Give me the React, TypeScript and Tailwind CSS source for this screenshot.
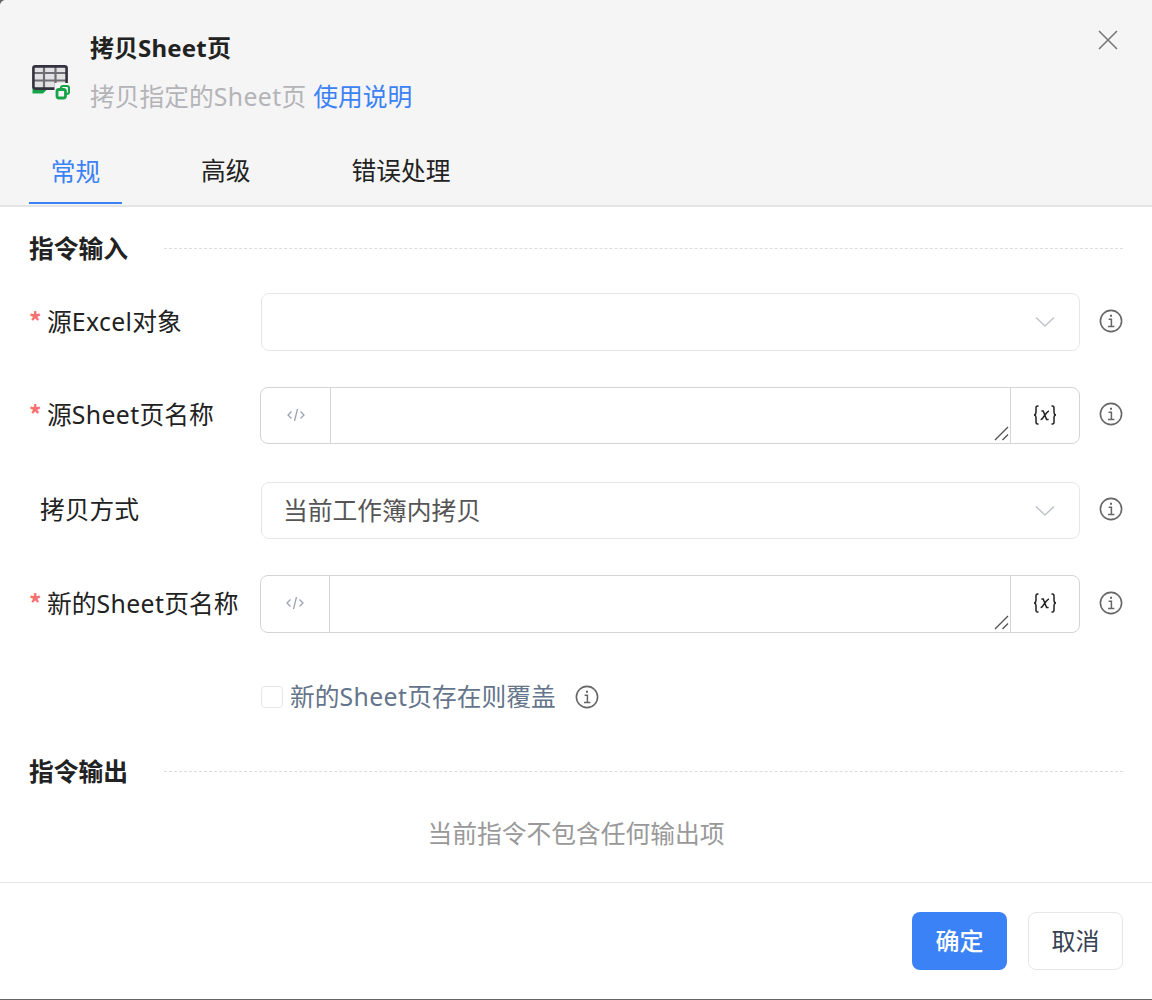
import React from "react";

const Lat = ({ children }: { children: React.ReactNode }) => <span className="tracking-[0.4px]">{children}</span>;

const Info = () => (
  <svg width="24" height="24" viewBox="0 0 24 24" fill="none" stroke="#666" className="shrink-0">
    <circle cx="12" cy="12" r="10.6" strokeWidth="1.6" />
    <path d="M12 5.8v1.9" strokeWidth="2" />
    <path d="M9.6 10.2H12.4V17M9 17.6H15.4" strokeWidth="1.5" />
  </svg>
);

const Chevron = () => (
  <svg width="20" height="12" viewBox="0 0 20 12" fill="none" stroke="#c0c4cc" strokeWidth="1.5" className="shrink-0">
    <path d="M1 1.5L10 10L19 1.5" />
  </svg>
);

const Star = () => (
  <span className="w-[18px] shrink-0 -translate-y-[2px] font-['Noto_Sans_CJK_SC',sans-serif] font-bold text-[#f87171]">*</span>
);

const Label = ({ children, required, indent }: { children: React.ReactNode; required?: boolean; indent?: boolean }) => (
  <div className={`flex w-[231px] shrink-0 items-center pb-[1px] text-[24.75px] leading-[36px] text-[#222222] ${indent ? "pl-[11px]" : ""}`}>
    {required && <Star />}
    <span className="whitespace-nowrap">{children}</span>
  </div>
);

const Select = ({ value, height }: { value?: string; height: string }) => (
  <div className={`flex ${height} ml-px flex-1 items-center justify-between rounded-[8px] border border-[#e4e7ed] bg-white pl-[21px] pr-[24px]`}>
    <span className="text-[24.75px] leading-[36px] text-[#555555]">{value}</span>
    <Chevron />
  </div>
);

const CodeInput = ({ left, height }: { left: string; height: string }) => (
  <div className={`flex ${height} flex-1 rounded-[8px] border border-[#d4d4d8] bg-white`}>
    <div className={`flex ${left} shrink-0 items-center justify-center border-r border-[#d4d4d8] pb-[2px]`}>
      <svg width="18" height="14" viewBox="0 0 18 14" fill="none" stroke="#9aa3b5" strokeWidth="1.3">
        <path d="M4.5 3.5L1 7L4.5 10.5M13.5 3.5L17 7L13.5 10.5M10.5 1L7.5 13" />
      </svg>
    </div>
    <div className="flex flex-1 items-end justify-end pb-[2px] pr-px">
      <svg width="15" height="15" viewBox="0 0 15 15" fill="none" stroke="#555" strokeWidth="1.4">
        <path d="M1 14L14 1M8.5 14L14 8.5" />
      </svg>
    </div>
    <div className="flex w-[69px] shrink-0 items-center justify-center border-l border-[#d4d4d8] pb-[2px]">
      <svg width="24" height="20" viewBox="0 0 24 20" fill="none" stroke="#222" strokeWidth="1.5">
        <path d="M5.5 1H4.6C3.4 1 3 1.8 3 3V7.6C3 9 2.4 9.7 1.2 10C2.4 10.3 3 11 3 12.4V17C3 18.2 3.4 19 4.6 19H5.5" />
        <path d="M18.5 1H19.4C20.6 1 21 1.8 21 3V7.6C21 9 21.6 9.7 22.8 10C21.6 10.3 21 11 21 12.4V17C21 18.2 20.6 19 19.4 19H18.5" />
        <path d="M8.4 6H10.2L13.6 14.5H15.6M16 6C14 6.6 11.4 10.6 9.6 13.2C9 14 8.4 14.5 7.6 14.5" />
      </svg>
    </div>
  </div>
);

const Section = ({ title }: { title: string }) => (
  <div className="flex h-[34px] items-center text-[24.75px] font-bold text-[#222222]">
    <span className="w-[135px] shrink-0">{title}</span>
    <div className="-mt-[2px] flex-1 border-t border-dashed border-[#dddddd]" />
  </div>
);

export default function App() {
  return (
    <div className="h-[1000px] w-[1152px] overflow-hidden bg-[#666666] font-['Noto_Sans','Noto_Sans_CJK_SC',sans-serif]">
      <div className="flex h-[999px] flex-col overflow-hidden rounded-tl-[6px] bg-white">
        <header className="h-[207px] shrink-0 border-b-2 border-[#e5e5e5] bg-[#f5f5f5]">
          <div className="flex h-[144px] pl-[30px] pr-[34px]">
            <svg width="40" height="36" viewBox="0 0 40 36" fill="none" className="mt-[64px] shrink-0">
              <path d="M2.5 23V29.4H13L19.5 23Z" fill="#16a34a" />
              <rect x="3.4" y="2.4" width="33.2" height="22.2" rx="2" fill="#e2e2e4" />
              <path d="M3 9H37M3 16.5H37M14 3V25M25.5 3V25" stroke="#6e6e74" strokeWidth="2.2" />
              <rect x="3.4" y="2.4" width="33.2" height="22.2" rx="2" stroke="#33323e" strokeWidth="2.6" />
              <rect x="24.5" y="19" width="15.5" height="17" fill="#f5f5f5" />
              <rect x="31" y="22" width="8" height="8" rx="2" stroke="#16a34a" strokeWidth="2.2" />
              <rect x="27" y="25.5" width="8.5" height="8.5" rx="2" fill="#f5f5f5" stroke="#16a34a" strokeWidth="2.8" />
            </svg>
            <div className="ml-[20px] flex flex-1 flex-col pt-[30px]">
              <div className="h-[36px] text-[24px] font-bold leading-[36px] text-[#222222]">拷贝<span className="tracking-[0.2px]">Sheet</span>页</div>
              <div className="mt-[13px] flex h-[36px] items-center gap-[7px] text-[24.75px] leading-[36px]">
                <span className="text-[#b4b4b8]">拷贝指定的<Lat>Sheet</Lat>页</span>
                <span className="text-[#3b82f6]">使用说明</span>
              </div>
            </div>
            <svg width="20" height="20" viewBox="0 0 20 20" fill="none" stroke="#777" strokeWidth="1.6" className="mt-[30px] shrink-0">
              <path d="M1 1L19 19M19 1L1 19" />
            </svg>
          </div>
          <nav className="flex h-[61px] pl-[29px] text-[24.75px] text-[#222222]">
            <div className="flex h-[60px] w-[93px] items-center justify-center border-b-2 border-[#3b82f6] pb-[3px] text-[#3b82f6]">常规</div>
            <div className="ml-[79px] flex h-[60px] items-center pb-[6px]">高级</div>
            <div className="ml-[101px] flex h-[60px] items-center pb-[6px]">错误处理</div>
          </nav>
        </header>

        <main className="flex flex-1 flex-col px-[29px] pt-[25px]">
          <Section title="指令输入" />
          <div className="mt-[27px] flex items-center gap-[19px]">
            <div className="flex flex-1 items-center">
              <Label required>源<Lat>Excel</Lat>对象</Label>
              <Select height="h-[58px]" />
            </div>
            <div className="-mt-[2px]"><Info /></div>
          </div>
          <div className="mt-[36px] flex items-center gap-[19px]">
            <div className="flex flex-1 items-center">
              <Label required>源<Lat>Sheet</Lat>页名称</Label>
              <CodeInput left="w-[70px]" height="h-[57px]" />
            </div>
            <div className="-mt-[3px]"><Info /></div>
          </div>
          <div className="mt-[38px] flex items-center gap-[19px]">
            <div className="flex flex-1 items-center">
              <Label indent>拷贝方式</Label>
              <Select value="当前工作簿内拷贝" height="h-[57px]" />
            </div>
            <div className="-mt-[3px]"><Info /></div>
          </div>
          <div className="mt-[36px] flex items-center gap-[19px]">
            <div className="flex flex-1 items-center">
              <Label required>新的<Lat>Sheet</Lat>页名称</Label>
              <CodeInput left="w-[69px]" height="h-[58px]" />
            </div>
            <div className="-mt-[2px]"><Info /></div>
          </div>
          <div className="mt-[46px] flex h-[36px] items-center pl-[232px]">
            <div className="h-[22px] w-[22px] shrink-0 rounded-[4px] border border-[#e4e7ed] bg-white" />
            <span className="ml-[7px] text-[24.75px] leading-[36px] text-[#64748b]">新的<Lat>Sheet</Lat>页存在则覆盖</span>
            <div className="ml-[19px]"><Info /></div>
          </div>
          <div className="mt-[40px]"><Section title="指令输出" /></div>
          <div className="mt-[27px] text-center text-[24.75px] leading-[36px] text-[#999999]">当前指令不包含任何输出项</div>
        </main>

        <footer className="flex h-[117px] shrink-0 items-start justify-end gap-[21px] border-t border-[#e5e5e5] pr-[29px] pt-[29px] text-[24px]">
          <button className="h-[58px] w-[95px] rounded-[8px] bg-[#3b82f6] font-medium text-white">确定</button>
          <button className="h-[58px] w-[95px] rounded-[8px] border border-[#e5e7eb] bg-white text-[#374151]">取消</button>
        </footer>
      </div>
    </div>
  );
}
